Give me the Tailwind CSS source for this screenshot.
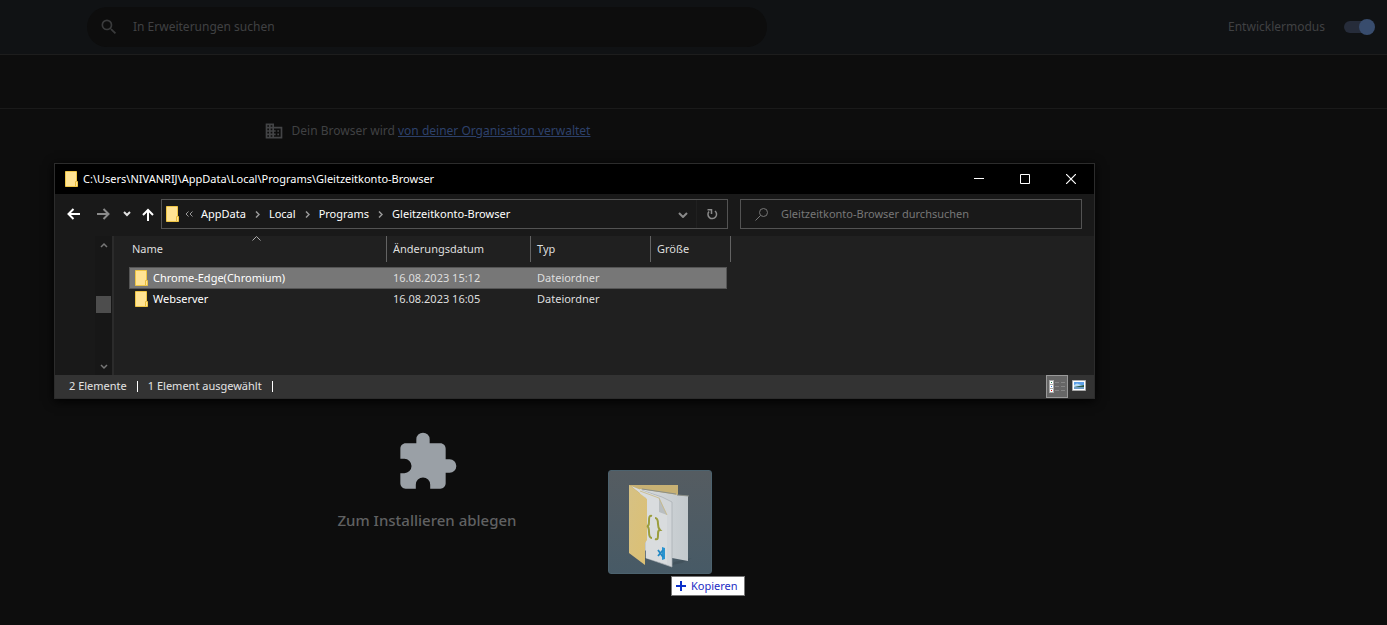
<!DOCTYPE html>
<html lang="de">
<head>
<meta charset="utf-8">
<title>Erweiterungen</title>
<script src="https://cdn.jsdelivr.net/npm/@tailwindcss/browser@4"></script>
</head>
<body class="relative min-h-screen overflow-hidden bg-[#0d0d0d] font-['Noto_Sans','Open_Sans',sans-serif] text-xs text-[#404143]">
<svg class="hidden">
  <symbol id="folder" viewBox="0 0 14 16">
    <path d="M0.500 0.500H11.500V10.500H12.500V15.500H0.500Z" fill="#ffe394" stroke="#eec545"/>
    <path d="M10.500 15V10.500H11.500" fill="none" stroke="#e8bc3c"/>
  </symbol>
</svg>

<header class="flex h-[55px] items-center justify-between border-b border-[#1d1d1d] bg-[#101214] pr-3 pb-px pl-[87px]">
  <label class="flex h-10 w-[680px] items-center gap-3 rounded-full bg-[#0d0d0d] pl-3">
    <svg class="size-5 shrink-0" viewBox="0 0 24 24" fill="#3a3b3c"><path d="M15.500 14h-.79l-.28-.27A6.470 6.470 0 0 0 16 9.500 6.500 6.500 0 1 0 9.500 16c1.610 0 3.090-.59 4.230-1.570l.27.28v.79l5 4.990L20.490 19l-4.990-5zm-6 0C7.010 14 5 11.990 5 9.500S7.010 5 9.500 5 14 7.010 14 9.500 11.990 14 9.500 14z"/></svg>
    <input type="text" aria-label="In Erweiterungen suchen" placeholder="In Erweiterungen suchen" class="w-full bg-transparent pl-[2px] outline-none placeholder:text-[#404143]">
  </label>
  <label class="flex items-center gap-[19px]">
    <span>Entwicklermodus</span>
    <span class="relative flex h-4 w-[31px] items-center">
      <input type="checkbox" checked class="h-3 w-7 appearance-none rounded-full bg-[#262c3a]">
      <span class="pointer-events-none absolute right-0 size-4 rounded-full bg-[#384c6d]"></span>
    </span>
  </label>
</header>

<div class="h-[54px] border-b border-[#1a1a1a]"></div>

<main class="flex w-[854px] max-w-full flex-col items-center pt-3">
  <p class="flex items-center gap-2">
    <svg class="size-5" viewBox="0 0 24 24" fill="#434446"><path d="M12 7V3H2v18h20V7H12zM6 19H4v-2h2v2zm0-4H4v-2h2v2zm0-4H4V9h2v2zm0-4H4V5h2v2zm4 12H8v-2h2v2zm0-4H8v-2h2v2zm0-4H8V9h2v2zm0-4H8V5h2v2zm10 12h-8v-2h2v-2h-2v-2h2v-2h-2V9h8v10zm-2-8h-2v2h2v-2zm0 4h-2v2h2v-2z"/></svg>
    <span>Dein Browser wird <a href="#" class="text-[#2d416b] underline">von deiner Organisation verwaltet</a></span>
  </p>
  <div class="mt-[289px] flex flex-col items-center gap-4">
    <svg class="size-16" viewBox="0 0 24 24" fill="#9aa0a6"><path d="M20.500 11H19V7c0-1.100-.9-2-2-2h-4V3.500a2.500 2.500 0 0 0-5 0V5H4c-1.100 0-1.990.9-1.990 2v3.800H3.500a2.700 2.700 0 0 1 0 5.400H2V20c0 1.100.9 2 2 2h3.800v-1.500a2.700 2.700 0 0 1 5.400 0V22H17c1.100 0 2-.9 2-2v-4h1.500a2.500 2.500 0 0 0 0-5z"/></svg>
    <p class="text-[15px] font-medium text-[#606162]">Zum Installieren ablegen</p>
  </div>
</main>

<section aria-label="Explorer" class="absolute top-[163px] right-[292px] left-[54px] border border-[#2c2c2c] bg-[#191919] text-[11px] text-white shadow-[0_2px_10px_#000000]">
  <div class="flex h-[30px] items-center bg-black pl-[10px]">
    <svg class="mr-1 h-4 w-[14px]"><use href="#folder"/></svg>
    <h1 class="flex-1">C:\Users\NIVANRIJ\AppData\Local\Programs\Gleitzeitkonto-Browser</h1>
    <button aria-label="Minimieren" class="grid h-[30px] w-[46px] place-items-center"><svg class="h-[10px] w-[10px]" stroke="#fff"><path d="M0 4.500H10"/></svg></button>
    <button aria-label="Maximieren" class="grid h-[30px] w-[46px] place-items-center"><svg class="h-[10px] w-[10px]" fill="none" stroke="#fff"><path d="M.5.5H9.500V9.500H.5Z"/></svg></button>
    <button aria-label="Schließen" class="grid h-[30px] w-[46px] place-items-center"><svg class="h-[10px] w-[10px]" stroke="#fff" stroke-width="1.200"><path d="M0 0 10 10M10 0 0 10"/></svg></button>
  </div>

  <div class="flex h-[42px] items-center gap-3 pr-3 pb-[2px] pl-3">
    <nav class="flex flex-1 items-center">
      <button aria-label="Zurück"><svg class="mr-[17px] h-3 w-[13px]" fill="none" stroke="#fff" stroke-width="2"><path d="M13 6H2M6.500 1 1.500 6l5 5"/></svg></button>
      <button aria-label="Vorwärts"><svg class="mr-[13px] h-3 w-[13px]" fill="none" stroke="#8a8a8a" stroke-width="2"><path d="M0 6H11M6.500 1l5 5-5 5"/></svg></button>
      <button aria-label="Verlauf"><svg class="mr-[11px] h-[6px] w-2" fill="none" stroke="#e0e0e0" stroke-width="2"><path d="M1 1 4 4 7 1"/></svg></button>
      <button aria-label="Nach oben"><svg class="mr-[7px] h-[13px] w-3" fill="none" stroke="#fff" stroke-width="2"><path d="M6 13V2M1 7 6 2l5 5"/></svg></button>
      <div class="flex h-[30px] flex-1 items-center border border-[#535353] pl-1">
        <svg class="mr-[5px] h-4 w-[14px]"><use href="#folder"/></svg>
        <svg class="mr-2 h-[6px] w-2" fill="none" stroke="#999"><path d="M3.500.5 1 3l2.500 2.500M7.500.5 5 3l2.500 2.500"/></svg>
        <ol class="flex flex-1 items-center gap-[9px]">
          <li><a href="#">AppData</a></li>
          <li aria-hidden="true"><svg class="h-[7px] w-[5px]" fill="none" stroke="#999" stroke-width="1.500"><path d="m1 .5 3 3-3 3"/></svg></li>
          <li><a href="#">Local</a></li>
          <li aria-hidden="true"><svg class="h-[7px] w-[5px]" fill="none" stroke="#999" stroke-width="1.500"><path d="m1 .5 3 3-3 3"/></svg></li>
          <li><a href="#">Programs</a></li>
          <li aria-hidden="true"><svg class="h-[7px] w-[5px]" fill="none" stroke="#999" stroke-width="1.500"><path d="m1 .5 3 3-3 3"/></svg></li>
          <li><a href="#">Gleitzeitkonto-Browser</a></li>
        </ol>
        <button aria-label="Vorherige Orte" class="grid h-full w-7 place-items-center border-r border-[#202020] pt-px"><svg class="h-[6px] w-[10px]" fill="none" stroke="#8a8a8a" stroke-width="2"><path d="M1 1 5 5 9 1"/></svg></button>
        <button aria-label="Aktualisieren" class="grid h-full w-[30px] place-items-center"><svg class="size-3" fill="none" stroke="#8a8a8a" stroke-width="1.500"><path d="M9 3A4.300 4.300 0 1 1 3 3.500M5.500 6V1.750H1.500"/></svg></button>
      </div>
    </nav>
    <label class="flex h-[30px] w-[342px] items-center gap-3 border border-[#535353] pl-[14px]">
      <svg class="h-[13px] w-[14px] shrink-0" fill="none" stroke="#777"><circle cx="8.500" cy="4.500" r="4"/><path d="M5.500 7.500.5 12.500"/></svg>
      <input type="text" aria-label="Gleitzeitkonto-Browser durchsuchen" placeholder="Gleitzeitkonto-Browser durchsuchen" class="w-full bg-transparent outline-none placeholder:text-[#777777]">
    </label>
  </div>

  <div class="flex h-[139px]">
    <div class="w-[59px] shrink-0 border-r-2 border-[#2b2b2b]">
      <div class="ml-auto flex h-full w-[17px] flex-col items-center bg-[#171717] pt-[6px] pb-[5px]">
        <svg class="h-[6px] w-2" fill="none" stroke="#777" stroke-width="1.500"><path d="M1 5 4 2 7 5"/></svg>
        <div class="mt-12 h-[17px] w-[15px] bg-[#4d4d4d]"></div>
        <svg class="mt-auto h-[6px] w-2" fill="none" stroke="#777" stroke-width="1.500"><path d="M1 1 4 4 7 1"/></svg>
      </div>
    </div>
    <div class="relative flex-1 bg-[#202020] pl-[15px]">
      <svg class="absolute top-0 left-[138px] h-[5px] w-[9px]" fill="none" stroke="#aaa"><path d="M.5 4.500l4-4 4 4"/></svg>
      <table class="w-[602px] table-fixed border-separate border-spacing-0 text-left">
        <colgroup><col class="w-[258px]"><col class="w-[144px]"><col class="w-[120px]"><col class="w-[76px]"><col class="w-1"></colgroup>
        <thead>
          <tr class="h-[26px] text-[#dedede] *:font-normal">
            <th class="border-r border-[#636363] pl-[3px]">Name</th>
            <th class="border-r border-[#636363] pl-[6px]">Änderungsdatum</th>
            <th class="border-r border-[#636363] pl-[6px]">Typ</th>
            <th class="pl-[6px]">Größe</th>
            <th class="border-r border-[#636363]"></th>
          </tr>
          <tr class="h-[5px]"></tr>
        </thead>
        <tbody class="text-[#dedede]">
          <tr class="h-[22px] bg-[#777777] *:border-y *:border-[#555555] *:p-0">
            <td class="border-l"><span class="flex items-center gap-1 pl-[5px] text-white"><svg class="h-4 w-[14px]"><use href="#folder"/></svg>Chrome-Edge(Chromium)</span></td>
            <td><span class="pl-[6px]">16.08.2023 15:12</span></td>
            <td><span class="pl-[6px]">Dateiordner</span></td>
            <td class="border-r"></td>
          </tr>
          <tr class="h-[20px] *:p-0">
            <td><span class="flex items-center gap-1 pl-[6px] text-white"><svg class="h-4 w-[14px]"><use href="#folder"/></svg>Webserver</span></td>
            <td><span class="pl-[6px]">16.08.2023 16:05</span></td>
            <td><span class="pl-[6px]">Dateiordner</span></td>
            <td></td>
          </tr>
        </tbody>
      </table>
    </div>
  </div>

  <footer class="flex h-[23px] items-center bg-[#333333] pr-2 pl-[14px] text-[#e4e4e4]">
    <span class="mr-[10px]">2 Elemente</span>
    <span class="mr-[10px] h-[11px] w-px bg-white"></span>
    <span class="mr-[10px]">1 Element ausgewählt</span>
    <span class="h-[11px] w-px bg-white"></span>
    <button aria-label="Details" class="ml-auto grid h-[23px] w-[22px] place-items-center border border-[#999999] bg-[#666666]">
      <svg class="h-[13px] w-4"><path d="M0 0H5V13H0Z" fill="#aaa"/><path d="M1 1H4V4H1ZM1 5H4V8H1ZM1 9H4V12H1Z" fill="#fff"/><path d="M2 2H3V3H2Z" fill="#197a46"/><path d="M2 6H3V7H2Z" fill="#2879d8"/><path d="M2 10H3V11H2Z" fill="#d00"/><path d="M6 2.500H10M12 2.500H16M6 6.500H10M12 6.500H16M6 10.500H10M12 10.500H16" stroke="#858585"/></svg>
    </button>
    <button aria-label="Große Symbole" class="ml-1 grid h-[13px] w-[14px] place-items-start">
      <svg class="h-[11px] w-[14px]"><path d="M.5.5H13.500V10.500H.5Z" fill="#fff" stroke="#aaa"/><path d="M2 2H12V9H2Z" fill="#5b9fe8"/><path d="M2 5 5 3.500 9 5H12V7H2Z" fill="#b8dbf4"/><path d="M7 6 12 5V7H2Z" fill="#275845"/><path d="M2 7H12V9H2Z" fill="#6f9cc4"/></svg>
    </button>
  </footer>
</section>

<!-- Dragged folder with drop hint -->
<div class="absolute top-[470px] left-[608px]">
  <div class="grid size-[104px] place-items-center rounded-[3px] border border-[#4c626e] bg-linear-to-b from-[#555c61] to-[#475a66]">
    <svg class="size-24" viewBox="0 0 96 96">
      <defs>
        <linearGradient id="flap" x2="1" y2="1"><stop stop-color="#d6c184"/><stop offset="1" stop-color="#dcc073"/></linearGradient>
        <linearGradient id="sheet" x2="1"><stop stop-color="#d7dbdd"/><stop offset="1" stop-color="#c3c9cd"/></linearGradient>
      </defs>
      <path d="M62 88 80 84 70 89 60 91Z" fill="#42525c"/>
      <path d="M17 11H66V70H17Z" fill="#c7b174"/>
      <path d="M28 15 66 21 76 22V87L60 84 28 75Z" fill="url(#sheet)"/>
      <path d="M30 15 64 20M65 21 77 22" stroke="#8b8f88" fill="none"/>
      <path d="M29 16 50 23 60 28V93L34 84V24Z" fill="#d2d6d9" stroke="#a8aeb1" stroke-width=".7"/>
      <path d="M19 12 47 23 55 41V90L34 84V24Z" fill="#d9dcde"/>
      <path d="M47 23 55 41 47 38Z" fill="#b9bec0"/>
      <path d="M28 17 47 24 55 41" fill="none" stroke="#c8b880" stroke-width=".8"/>
      <path d="M17 11 35 25V66L33 69V91L17 79Z" fill="url(#flap)"/>
      <path d="M40 42c-3-1-3 2-3 5 0 3 0 5-2 5 2 1 2 3 2 6 0 3 0 6 3 6M43 44c3 0 3 3 3 6s0 4 2 6c-2 0-2 2-2 5s0 5-3 4" fill="none" stroke="#9b9d3d" stroke-width="2"/>
      <path d="M50 73 53 74V85L50 86Z" fill="#2a94d0"/>
      <path d="M46 76 51 83M46 82 51 76" stroke="#2288c4" stroke-width="1.800"/>
    </svg>
  </div>
  <div class="absolute top-[106px] left-[63px] flex h-5 w-[74px] items-center gap-[5px] border border-[#767676] bg-white pl-1 text-[11px] text-[#1c2cc4]">
    <svg class="size-[10px]" stroke="#0a2fc9" stroke-width="2"><path d="M5 0V10M0 5H10"/></svg>
    Kopieren
  </div>
</div>
</body>
</html>
